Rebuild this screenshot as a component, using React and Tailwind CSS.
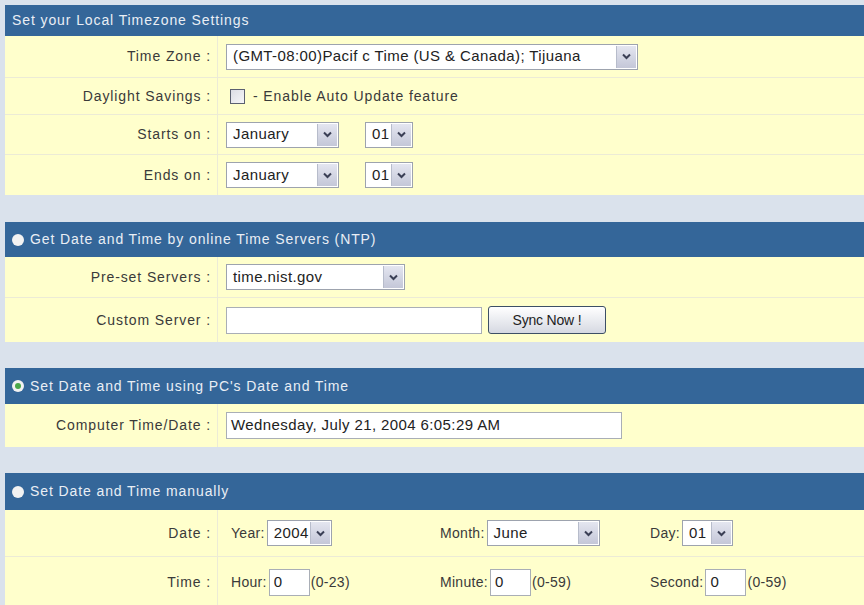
import React from 'react';

const font = { fontFamily: '"Liberation Sans", Arial, sans-serif' };

const Arrow = () => (
  <div className="flex h-full w-[20px] shrink-0 items-center justify-center border-l border-[#b7bccb] bg-gradient-to-b from-[#e4e6f0] to-[#c4c7d8]">
    <svg width="9" height="7" viewBox="0 0 9 7">
      <path d="M1 1.5 L4.5 5 L8 1.5" fill="none" stroke="#3a3f55" strokeWidth="2" />
    </svg>
  </div>
);

const Select = ({ value, width }) => (
  <div
    className="flex h-[26px] items-stretch border border-[#9da3ae] bg-white p-[1px] text-[15px] tracking-[0.4px] text-[#222]"
    style={{ width }}
  >
    <div className="flex flex-1 items-center overflow-hidden whitespace-nowrap pl-[5px]">{value}</div>
    <Arrow />
  </div>
);

const TextBox = ({ value = '', width }) => (
  <div
    className="flex h-[27px] items-center border border-[#a9aeb6] bg-white pl-[4px] text-[15px] tracking-[0.4px] text-[#222]"
    style={{ width }}
  >
    {value}
  </div>
);

const Row = ({ label, h, children, last }) => (
  <div className={`flex ${last ? '' : 'border-b border-[#ecebd6]'}`} style={{ height: h }}>
    <div className="flex w-[213px] shrink-0 items-center justify-end border-r border-[#ecebd6] pr-[6px] text-[14px] tracking-[0.9px] text-[#3a3a3a]">
      {label}
    </div>
    <div className="flex flex-1 items-center pl-[8px]">{children}</div>
  </div>
);

const Radio = ({ checked }) => (
  <span className="mr-[6px] flex h-[12px] w-[12px] items-center justify-center rounded-full bg-[#f2f2f2]">
    {checked && <span className="h-[6px] w-[6px] rounded-full bg-[#4aa84a]" />}
  </span>
);

const Header = ({ title, radio, checked, h }) => (
  <div
    className="flex items-center bg-[#346699] pl-[7px] text-[14px] tracking-[0.9px] text-[#e9eef5]"
    style={{ height: h }}
  >
    {radio && <Radio checked={checked} />}
    {title}
  </div>
);

const Cell = ({ children }) => (
  <div className="flex w-[210px] items-center text-[14px] tracking-[0.3px] text-[#3a3a3a]">{children}</div>
);

export default function App() {
  return (
    <div className="h-[605px] w-[864px] overflow-hidden bg-[#dae2ec] pl-[5px] pt-[5px]" style={font}>
      <div className="w-[880px]">
        {/* timezone */}
        <div className="bg-[#ffffcc]">
          <Header title="Set your Local Timezone Settings" h={31} />
          <Row label="Time Zone :" h={42}>
            <Select value="(GMT-08:00)Pacif c Time (US & Canada); Tijuana" width={412} />
          </Row>
          <Row label="Daylight Savings :" h={37}>
            <span className="ml-[4px] mr-[8px] h-[15px] w-[15px] border border-[#5b6070] bg-gradient-to-br from-[#dcdde4] to-[#f6f6f8]" />
            <span className="text-[14px] tracking-[0.9px] text-[#3a3a3a]">- Enable Auto Update feature</span>
          </Row>
          <Row label="Starts on :" h={40}>
            <Select value="January" width={113} />
            <div className="ml-[26px]">
              <Select value="01" width={48} />
            </div>
          </Row>
          <Row label="Ends on :" h={40} last>
            <Select value="January" width={113} />
            <div className="ml-[26px]">
              <Select value="01" width={48} />
            </div>
          </Row>
        </div>

        <div className="h-[27px]" />

        {/* ntp */}
        <div className="bg-[#ffffcc]">
          <Header title="Get Date and Time by online Time Servers (NTP)" radio h={35} />
          <Row label="Pre-set Servers :" h={41}>
            <Select value="time.nist.gov" width={179} />
          </Row>
          <Row label="Custom Server :" h={44} last>
            <TextBox width={256} />
            <button className="ml-[6px] h-[28px] w-[118px] rounded-[3px] border border-[#3d4f66] bg-gradient-to-b from-white to-[#d6d9e2] text-[14px] tracking-[-0.2px] text-[#222]">
              Sync Now !
            </button>
          </Row>
        </div>

        <div className="h-[26px]" />

        {/* pc time */}
        <div className="bg-[#ffffcc]">
          <Header title="Set Date and Time using PC's Date and Time" radio checked h={36} />
          <Row label="Computer Time/Date :" h={43} last>
            <TextBox value="Wednesday, July 21, 2004 6:05:29 AM" width={396} />
          </Row>
        </div>

        <div className="h-[26px]" />

        {/* manual */}
        <div className="bg-[#ffffcc]">
          <Header title="Set Date and Time manually" radio h={37} />
          <Row label="Date :" h={47}>
            <Cell>
              <span className="ml-[5px] mr-[2px]">Year:</span>
              <Select value="2004" width={65} />
            </Cell>
            <Cell>
              <span className="ml-[4px] mr-[2px]">Month:</span>
              <Select value="June" width={113} />
            </Cell>
            <Cell>
              <span className="ml-[4px] mr-[2px]">Day:</span>
              <Select value="01" width={51} />
            </Cell>
          </Row>
          <Row label="Time :" h={50} last>
            <Cell>
              <span className="ml-[5px] mr-[2px]">Hour:</span>
              <TextBox value="0" width={41} />
              <span className="ml-[1px]">(0-23)</span>
            </Cell>
            <Cell>
              <span className="ml-[4px] mr-[2px]">Minute:</span>
              <TextBox value="0" width={41} />
              <span className="ml-[1px]">(0-59)</span>
            </Cell>
            <Cell>
              <span className="ml-[4px] mr-[2px]">Second:</span>
              <TextBox value="0" width={41} />
              <span className="ml-[1px]">(0-59)</span>
            </Cell>
          </Row>
        </div>
      </div>
    </div>
  );
}
